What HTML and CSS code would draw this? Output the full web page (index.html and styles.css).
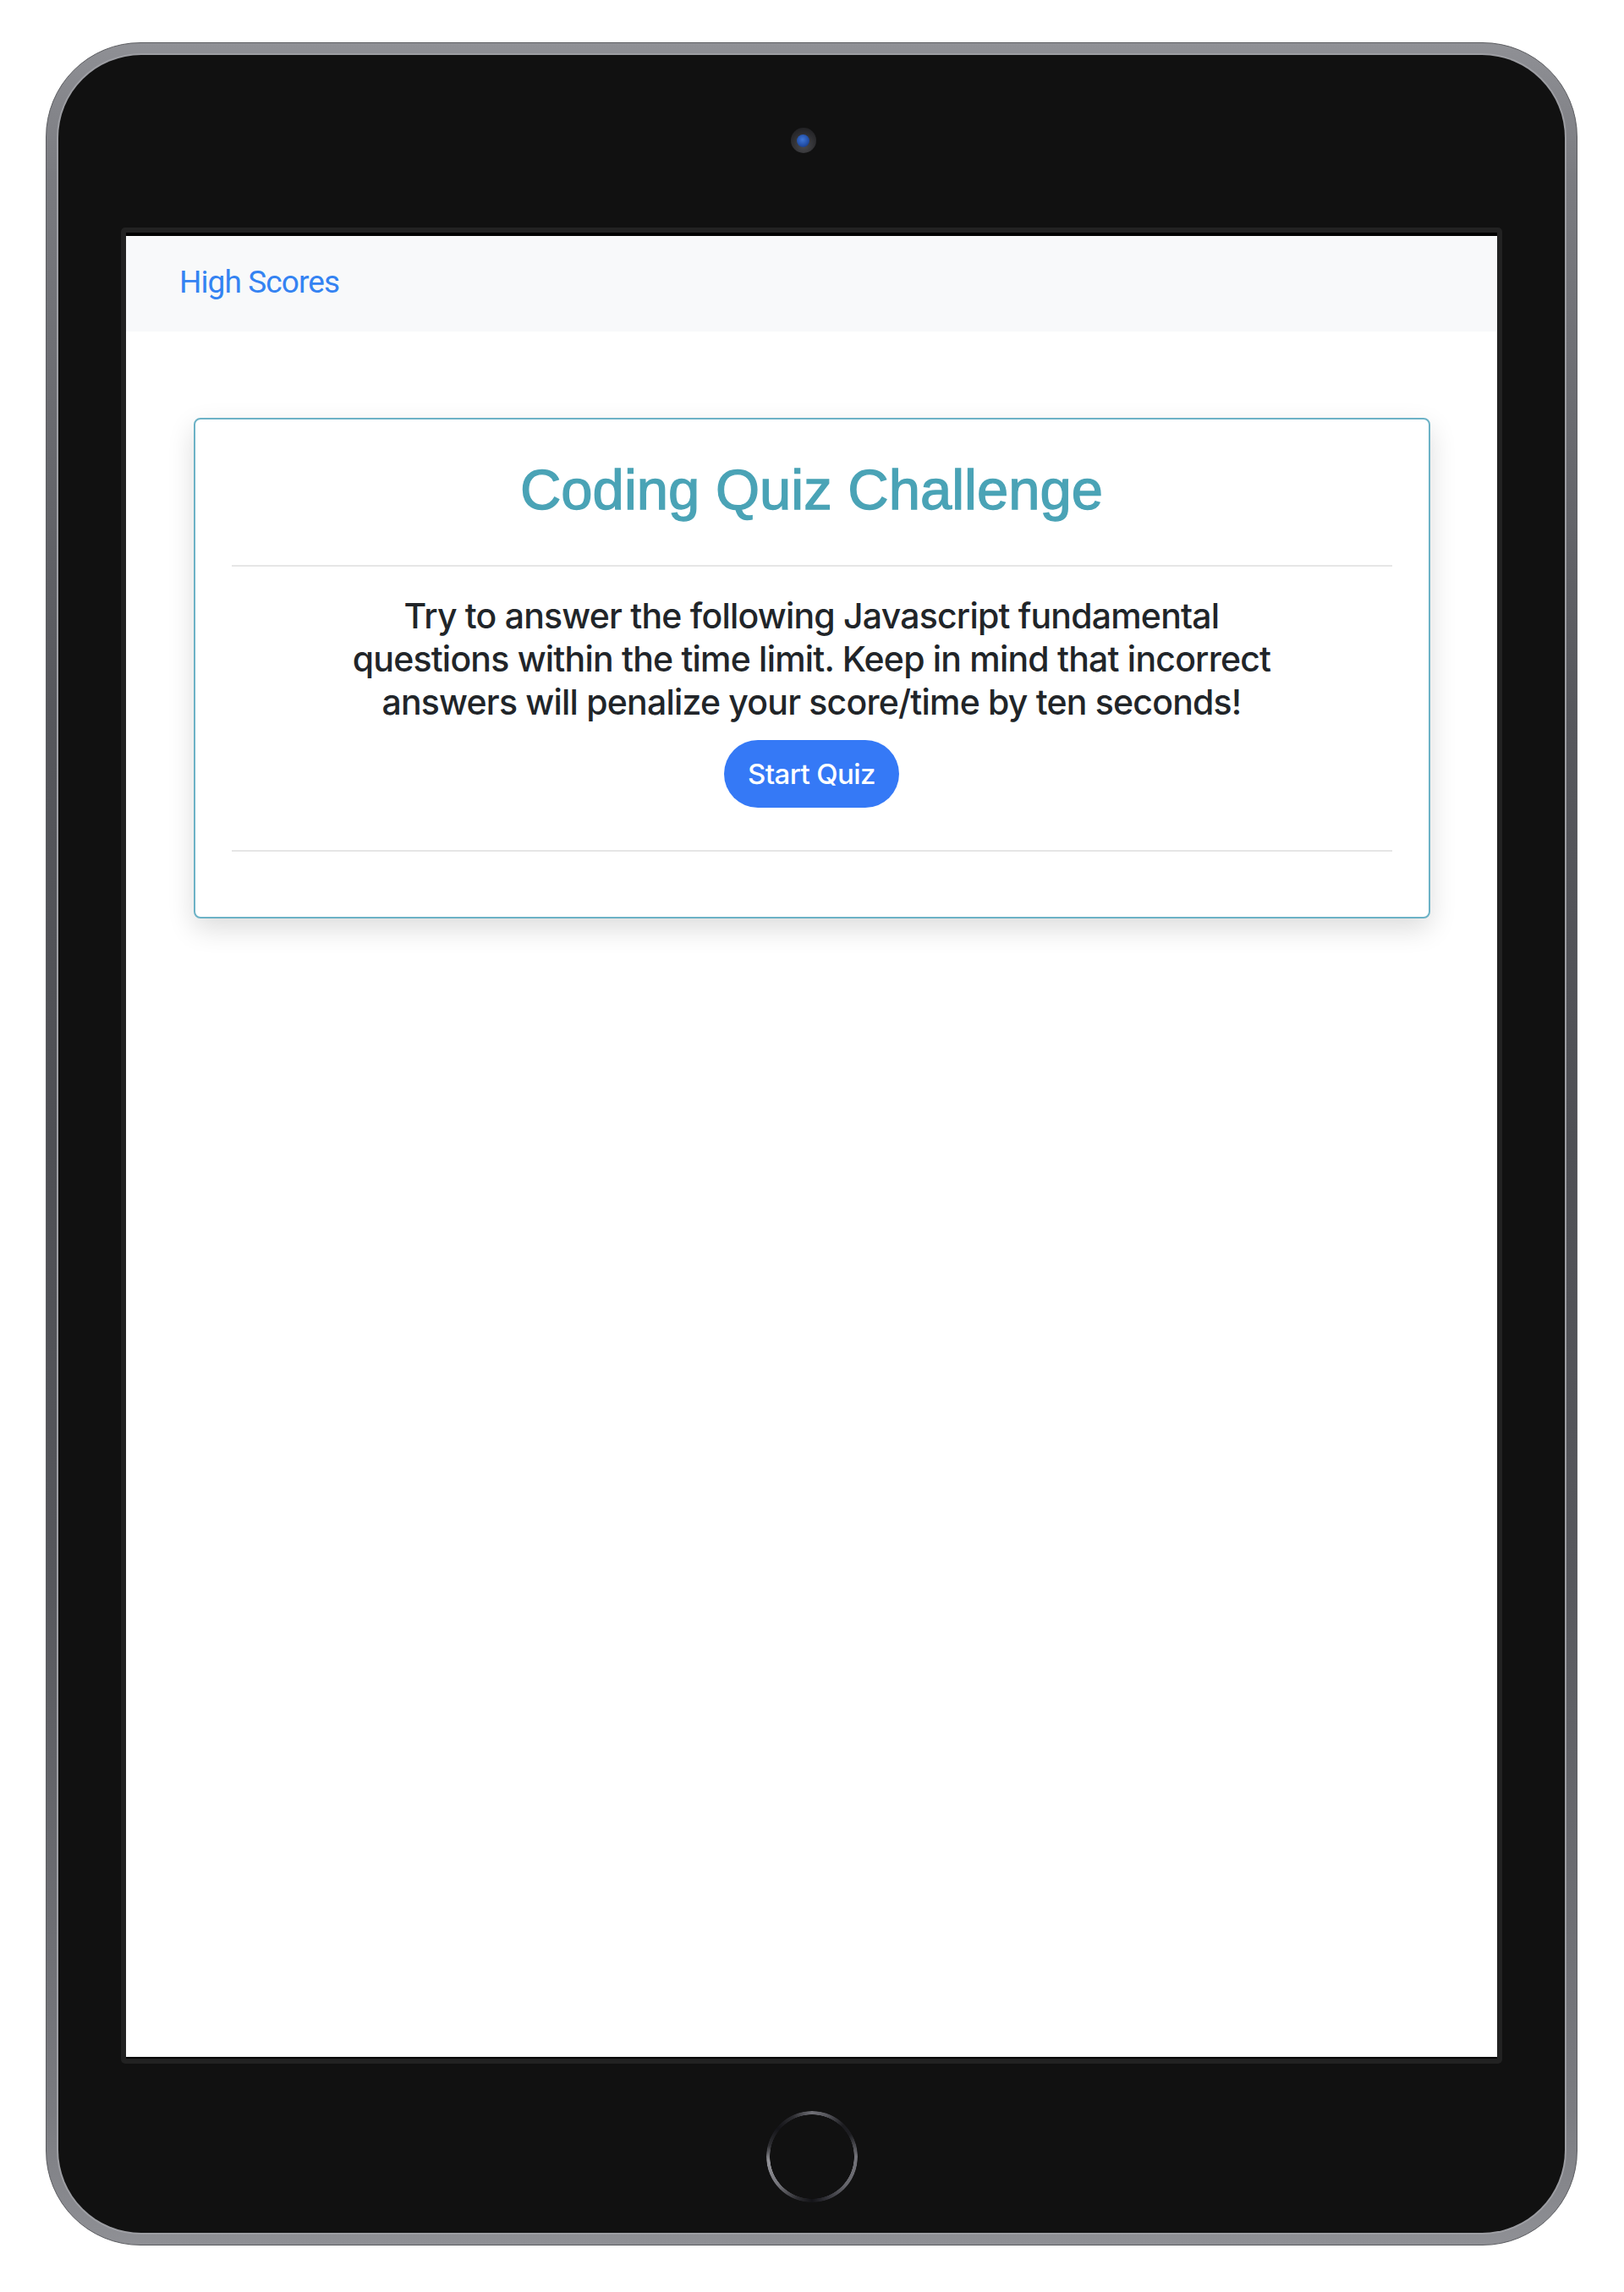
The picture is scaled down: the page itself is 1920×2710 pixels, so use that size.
FILE: index.html
```html
<!DOCTYPE html>
<html lang="en">
<head>
<meta charset="utf-8">
<title>Coding Quiz Challenge</title>
<link rel="stylesheet" href="styles.css">
</head>
<body>
<div class="device">
  <div class="device-inner">
    <div class="camera"><div class="lens"></div></div>
    <div class="bezel">
      <div class="screen">
        <nav class="navbar"><a class="brand" href="#">High Scores</a></nav>
        <main class="content">
          <section class="card">
            <h1 class="title">Coding Quiz Challenge</h1>
            <hr class="divider">
            <p class="intro">Try to answer the following Javascript fundamental<br>questions within the time limit. Keep in mind that incorrect<br>answers will penalize your score/time by ten seconds!</p>
            <button class="start-btn" type="button">Start Quiz</button>
            <hr class="divider divider-bottom">
          </section>
        </main>
      </div>
    </div>
    <div class="home"></div>
  </div>
</div>
</body>
</html>
```

FILE: styles.css
```css
* { box-sizing: border-box; }

html, body {
  margin: 0;
  background: #ffffff;
}

body {
  padding: 50px 0 0 54px;
  height: 2710px;
  overflow: hidden;
  font-family: "Inter", "Liberation Sans", sans-serif;
}

.device {
  width: 1811px;
  height: 2605px;
  padding: 14px;
  border-radius: 112px;
  border: 1px solid #5c5d61;
  background: linear-gradient(to bottom, #8f9095 0%, #7a7b80 6%, #56575c 30%, #4e4f54 50%, #56575c 70%, #7a7b80 94%, #8f9095 100%);
}

.device-inner {
  width: 100%;
  height: 100%;
  border-radius: 98px;
  background: #111111;
  box-shadow: 0 0 0 2px #9d9ea3;
  display: flex;
  flex-direction: column;
  align-items: center;
}

.camera {
  margin-top: 86px;
  margin-right: 20px;
  width: 30px;
  height: 30px;
  border-radius: 50%;
  background: radial-gradient(circle at 50% 70%, #4a4a4d 0%, #2b2b2e 60%, #1a1a1c 100%);
  display: flex;
  align-items: center;
  justify-content: center;
}

.lens {
  width: 15px;
  height: 15px;
  border-radius: 50%;
  background: radial-gradient(circle at 45% 40%, #3f76d6 0%, #2350a8 55%, #142d66 100%);
}

.bezel {
  margin-top: 88px;
  width: 1633px;
  height: 2171px;
  padding: 6px;
  background: #222222;
  border-radius: 5px;
}

.screen {
  width: 100%;
  height: 100%;
  background: #ffffff;
  border-top: 4px solid #000000;
  border-bottom: 2px solid #000000;
  overflow: hidden;
}

.navbar {
  height: 113px;
  background: #f8f9fa;
  display: flex;
  align-items: center;
  padding-left: 63px;
}

.brand {
  font-family: "Roboto", "Liberation Sans", sans-serif;
  font-size: 37px;
  letter-spacing: -0.9px;
  color: #3483f2;
  text-decoration: none;
  padding-bottom: 4px;
}

.content {
  padding-top: 102px;
  display: flex;
  justify-content: center;
}

.card {
  width: 1462px;
  border: 2px solid #6cb2c6;
  border-radius: 8px;
  background: #ffffff;
  box-shadow: 0 12px 32px rgba(0, 0, 0, 0.14);
  padding: 41px 43px 77px;
  display: flex;
  flex-direction: column;
  align-items: center;
  text-align: center;
}

.title {
  margin: 0;
  font-family: "Liberation Sans", Arial, sans-serif;
  font-weight: 400;
  font-size: 67px;
  line-height: 84px;
  color: #4aa3b6;
  -webkit-text-stroke: 1.3px #4aa3b6;
}

.divider {
  width: 100%;
  margin: 47px 0 0;
  border: 0;
  border-top: 2px solid #e6e6e6;
}

.intro {
  margin: 33px 0 0;
  font-family: "Inter", "Liberation Sans", sans-serif;
  font-weight: 500;
  font-size: 41px;
  line-height: 51px;
  letter-spacing: -0.8px;
  color: #212529;
}

.start-btn {
  margin-top: 19px;
  height: 80px;
  padding: 0 28px;
  border: 0;
  border-radius: 40px;
  background: #3579f6;
  color: #ffffff;
  font-family: "Inter", "Liberation Sans", sans-serif;
  font-weight: 500;
  font-size: 33px;
  letter-spacing: -0.6px;
}

.divider-bottom {
  margin-top: 50px;
}

.home {
  margin-top: 56px;
  width: 108px;
  height: 108px;
  border-radius: 50%;
  background: conic-gradient(from 0deg, #707076 0deg, #55555b 20deg, #1c1c20 45deg, #1e1e22 60deg, #74747a 90deg, #66666c 130deg, #34343a 160deg, #141418 180deg, #2e2e32 200deg, #74747a 230deg, #939398 265deg, #2e2e32 285deg, #141418 310deg, #2e2e32 335deg, #707076 360deg);
  -webkit-mask: radial-gradient(circle, transparent 49.5px, #000 50px);
  mask: radial-gradient(circle, transparent 49.5px, #000 50px);
}
```
